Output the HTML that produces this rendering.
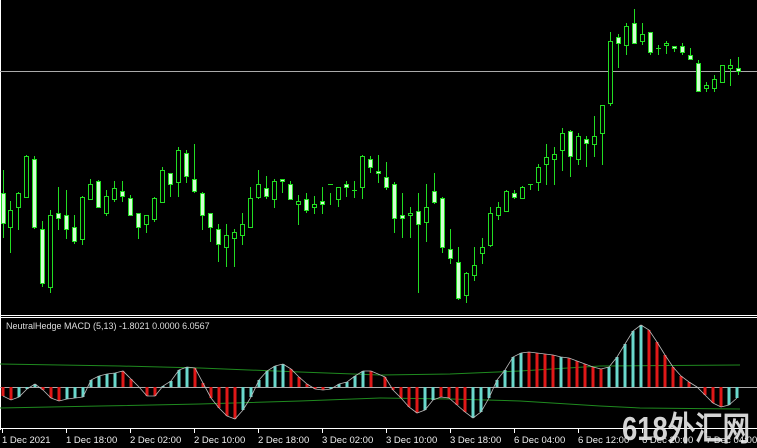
<!DOCTYPE html>
<html><head><meta charset="utf-8"><style>
html,body{margin:0;padding:0;background:#000;width:757px;height:448px;overflow:hidden}
svg{display:block}
text{font-family:"Liberation Sans",sans-serif}
</style></head><body>
<svg width="757" height="448" viewBox="0 0 757 448" xmlns="http://www.w3.org/2000/svg">
<rect width="757" height="448" fill="#000"/>
<line x1="0.5" y1="0" x2="0.5" y2="430" stroke="#fff"/>
<line x1="0" y1="315.5" x2="757" y2="315.5" stroke="#fff"/>
<line x1="0" y1="317.5" x2="757" y2="317.5" stroke="#fff"/>
<line x1="0" y1="428.5" x2="757" y2="428.5" stroke="#fff"/>
<line x1="0" y1="71.5" x2="757" y2="71.5" stroke="#aaa"/>
<path stroke="#2d2" stroke-width="1" fill="none" d="
M3.5 170V238 M10.5 201V253 M18.5 192V230 M26.5 155V198 M34.5 156V229 M42.5 221V287 M50.5 210V293 M58.5 187V230 M66.5 190V239 M74.5 215V244
M82.5 196V245 M90.5 179V199 M98.5 180V208 M106.5 190V216 M114.5 181V202 M122.5 181V202 M130.5 195V216 M138.5 213V239 M146.5 215V233 M154.5 197V222
M162.5 167V202 M170.5 173V197 M178.5 147V197 M186.5 150V183 M194.5 144V193 M202.5 192V230 M210.5 213V242 M218.5 224V262 M226.5 224V267 M234.5 229V267
M242.5 213V245 M250.5 187V227 M258.5 170V199 M266.5 176V199 M274.5 179V208 M282.5 179V193 M290.5 181V199 M298.5 195V225 M306.5 193V213 M314.5 196V214
M322.5 187V214 M330.5 193V205 M338.5 187V207 M346.5 181V197 M354.5 181V198 M362.5 155V199 M370.5 156V173 M378.5 155V183 M386.5 162V190 M394.5 182V233
M402.5 193V238 M410.5 207V238 M418.5 193V293 M426.5 184V242 M434.5 173V204 M442.5 197V253 M450.5 229V264 M458.5 247V300 M466.5 272V303 M474.5 247V281
M482.5 238V264 M490.5 207V247 M498.5 202V220 M506.5 190V211 M514.5 190V199 M522.5 186V199 M530.5 184V190 M538.5 164V191 M546.5 144V185 M554.5 147V185
M562.5 128V171 M570.5 130V177 M578.5 133V165 M586.5 136V167 M594.5 116V157 M602.5 105V165 M610.5 32V106 M618.5 34V68 M626.5 23V55 M634.5 9V43
M642.5 23V45 M650.5 32V55 M658.5 45V55 M666.5 41V54 M674.5 46V52 M682.5 43V55 M690.5 48V60 M698.5 60V92 M706.5 82V92 M714.5 75V92
M722.5 65V82 M730.5 59V86 M738.5 57V75"/>
<g fill="#000" stroke="#2d2">
<rect x="8.5" y="210.5" width="4" height="17"/><rect x="16.5" y="193.5" width="4" height="14"/><rect x="24.5" y="156.5" width="4" height="41"/>
<rect x="48.5" y="215.5" width="4" height="72"/><rect x="80.5" y="197.5" width="4" height="42"/><rect x="88.5" y="184.5" width="4" height="15"/>
<rect x="104.5" y="196.5" width="4" height="17"/><rect x="112.5" y="188.5" width="4" height="11"/><rect x="144.5" y="215.5" width="4" height="9"/>
<rect x="152.5" y="198.5" width="4" height="21"/><rect x="160.5" y="170.5" width="4" height="32"/><rect x="176.5" y="150.5" width="4" height="32"/>
<rect x="224.5" y="235.5" width="4" height="12"/><rect x="232.5" y="232.5" width="4" height="6"/><rect x="240.5" y="224.5" width="4" height="11"/>
<rect x="248.5" y="198.5" width="4" height="29"/><rect x="256.5" y="184.5" width="4" height="13"/><rect x="272.5" y="181.5" width="4" height="18"/>
<rect x="296.5" y="201.5" width="4" height="3"/><rect x="312.5" y="204.5" width="4" height="3"/><rect x="336.5" y="187.5" width="4" height="12"/>
<rect x="360.5" y="156.5" width="4" height="31"/><rect x="408.5" y="213.5" width="4" height="2"/><rect x="424.5" y="207.5" width="4" height="15"/>
<rect x="464.5" y="273.5" width="4" height="22"/><rect x="472.5" y="265.5" width="4" height="10"/><rect x="480.5" y="247.5" width="4" height="6"/>
<rect x="488.5" y="213.5" width="4" height="32"/><rect x="496.5" y="207.5" width="4" height="8"/><rect x="504.5" y="191.5" width="4" height="20"/>
<rect x="520.5" y="187.5" width="4" height="11"/><rect x="536.5" y="167.5" width="4" height="15"/><rect x="544.5" y="157.5" width="4" height="7"/>
<rect x="552.5" y="154.5" width="4" height="5"/><rect x="560.5" y="133.5" width="4" height="17"/><rect x="576.5" y="136.5" width="4" height="23"/>
<rect x="592.5" y="136.5" width="4" height="8"/><rect x="600.5" y="105.5" width="4" height="28"/><rect x="608.5" y="41.5" width="4" height="62"/>
<rect x="624.5" y="26.5" width="4" height="19"/><rect x="640.5" y="34.5" width="4" height="7"/><rect x="664.5" y="43.5" width="4" height="2"/>
<rect x="704.5" y="85.5" width="4" height="3"/><rect x="712.5" y="79.5" width="4" height="9"/><rect x="720.5" y="65.5" width="4" height="17"/>
<rect x="728.5" y="65.5" width="4" height="3"/>
</g>
<path stroke="#2d2" d="M328 184.5H333 M352 190.5H357 M528 184.5H533 M656 48.5H661"/>
<g fill="#d4ffd4" stroke="#2d2">
<rect x="1.5" y="193.5" width="4" height="30"/><rect x="32.5" y="159.5" width="4" height="68"/><rect x="40.5" y="229.5" width="4" height="54"/>
<rect x="56.5" y="213.5" width="4" height="5"/><rect x="64.5" y="215.5" width="4" height="14"/><rect x="72.5" y="227.5" width="4" height="14"/>
<rect x="96.5" y="181.5" width="4" height="26"/><rect x="120.5" y="191.5" width="4" height="5"/><rect x="128.5" y="198.5" width="4" height="17"/>
<rect x="136.5" y="213.5" width="4" height="14"/><rect x="168.5" y="173.5" width="4" height="11"/><rect x="184.5" y="153.5" width="4" height="23"/>
<rect x="192.5" y="179.5" width="4" height="12"/><rect x="200.5" y="193.5" width="4" height="22"/><rect x="208.5" y="213.5" width="4" height="14"/>
<rect x="216.5" y="229.5" width="4" height="15"/><rect x="264.5" y="188.5" width="4" height="8"/><rect x="280.5" y="179.5" width="4" height="2"/>
<rect x="288.5" y="184.5" width="4" height="15"/><rect x="304.5" y="199.5" width="4" height="11"/><rect x="320.5" y="201.5" width="4" height="3"/>
<rect x="344.5" y="184.5" width="4" height="3"/><rect x="368.5" y="159.5" width="4" height="8"/><rect x="376.5" y="171.5" width="4" height="2"/>
<rect x="384.5" y="177.5" width="4" height="10"/><rect x="392.5" y="184.5" width="4" height="34"/><rect x="400.5" y="215.5" width="4" height="3"/>
<rect x="416.5" y="211.5" width="4" height="13"/><rect x="432.5" y="191.5" width="4" height="11"/><rect x="440.5" y="198.5" width="4" height="49"/>
<rect x="448.5" y="249.5" width="4" height="9"/><rect x="456.5" y="262.5" width="4" height="36"/><rect x="512.5" y="193.5" width="4" height="4"/>
<rect x="568.5" y="131.5" width="4" height="25"/><rect x="584.5" y="139.5" width="4" height="4"/><rect x="616.5" y="37.5" width="4" height="6"/>
<rect x="632.5" y="23.5" width="4" height="20"/><rect x="648.5" y="32.5" width="4" height="20"/><rect x="672.5" y="46.5" width="4" height="2"/>
<rect x="680.5" y="46.5" width="4" height="6"/><rect x="688.5" y="55.5" width="4" height="4"/><rect x="696.5" y="63.5" width="4" height="28"/>
<rect x="736.5" y="68.5" width="4" height="3"/>
</g>
<text x="6" y="329" font-size="9" fill="#ddd">NeutralHedge MACD (5,13) -1.8021 0.0000 6.0567</text>
<polyline fill="none" stroke="#1f8a1f" points="0,364 120,366 200,368 300,372 380,375 450,374 520,371 600,366 740,365"/>
<polyline fill="none" stroke="#1f8a1f" points="0,408 100,406 200,404 300,401 380,398 450,399 520,401 600,406 640,408 740,409"/>
<line x1="0" y1="387.5" x2="757" y2="387.5" stroke="#aaa"/>
<g stroke-width="3">
<path stroke="#e01818" d="M3 387V396M11 387V400M43 387V390M51 387V398M59 387V401M123 387V371M131 387V379M147 387V396M155 387V396M195 387V368M203 387V383M211 387V398M219 387V408M227 387V416M235 387V419M291 387V369M299 387V377M307 387V384M315 387V389M323 387V390M371 387V371M385 387V377M393 387V390M401 387V398M409 387V407M417 387V413M441 387V397M449 387V398M457 387V405M465 387V412M529 387V352M537 387V353M545 387V354M553 387V355M569 387V358M577 387V361M585 387V364M593 387V367M601 387V369M649 387V330M657 387V342M665 387V355M673 387V367M681 387V376M689 387V382M705 387V395M713 387V403M721 387V407"/>
<path stroke="#6ad8cc" d="M19 387V397M27 387V389M35 387V384M67 387V399M75 387V398M83 387V397M91 387V380M99 387V376M107 387V374M115 387V373M163 387V386M171 387V381M179 387V370M187 387V367M243 387V410M251 387V397M259 387V380M267 387V371M275 387V366M283 387V364M331 387V389M339 387V384M347 387V382M355 387V376M363 387V371M425 387V410M433 387V400M473 387V418M481 387V412M489 387V398M497 387V380M505 387V370M513 387V357M521 387V353M561 387V357M609 387V367M617 387V357M625 387V344M633 387V331M641 387V325M729 387V405M737 387V398"/>
</g>
<polyline fill="none" stroke="#bbb" stroke-width="0.8" points="3,396 11,400 19,397 27,389 35,384 43,390 51,398 59,401 67,399 75,398 83,397 91,380 99,376 107,374 115,373 123,371 131,379 139,387 147,396 155,396 163,386 171,381 179,370 187,367 195,368 203,383 211,398 219,408 227,416 235,419 243,410 251,397 259,380 267,371 275,366 283,364 291,369 299,377 307,384 315,389 323,390 331,389 339,384 347,382 355,376 363,371 371,371 385,377 393,390 401,398 409,407 417,413 425,410 433,400 441,397 449,398 457,405 465,412 473,418 481,412 489,398 497,380 505,370 513,357 521,353 529,352 537,353 545,354 553,355 561,357 569,358 577,361 585,364 593,367 601,369 609,367 617,357 625,344 633,331 641,325 649,330 657,342 665,355 673,367 681,376 689,382 697,387 705,395 713,403 721,407 729,405 737,398"/>
<path stroke="#fff" d="M2.5 429V433M66.5 429V433M130.5 429V433M194.5 429V433M258.5 429V433M322.5 429V433M386.5 429V433M450.5 429V433M514.5 429V433M578.5 429V433M642.5 429V433M706.5 429V433"/>
<g font-size="9.5" fill="#eee">
<text x="2" y="443">1 Dec 2021</text><text x="66" y="443">1 Dec 18:00</text><text x="130" y="443">2 Dec 02:00</text>
<text x="194" y="443">2 Dec 10:00</text><text x="258" y="443">2 Dec 18:00</text><text x="322" y="443">3 Dec 02:00</text>
<text x="386" y="443">3 Dec 10:00</text><text x="450" y="443">3 Dec 18:00</text><text x="514" y="443">6 Dec 04:00</text>
<text x="578" y="443">6 Dec 12:00</text><text x="642" y="443">6 Dec 20:00</text><text x="706" y="443">7 Dec 04:00</text>
</g>
<text x="622" y="440" font-size="33" font-weight="bold" fill="#e6e6e6" fill-opacity="0.92" font-family="'Liberation Sans','Noto Sans CJK SC',sans-serif" textLength="128" lengthAdjust="spacingAndGlyphs">618外汇网</text>
</svg>
</body></html>
